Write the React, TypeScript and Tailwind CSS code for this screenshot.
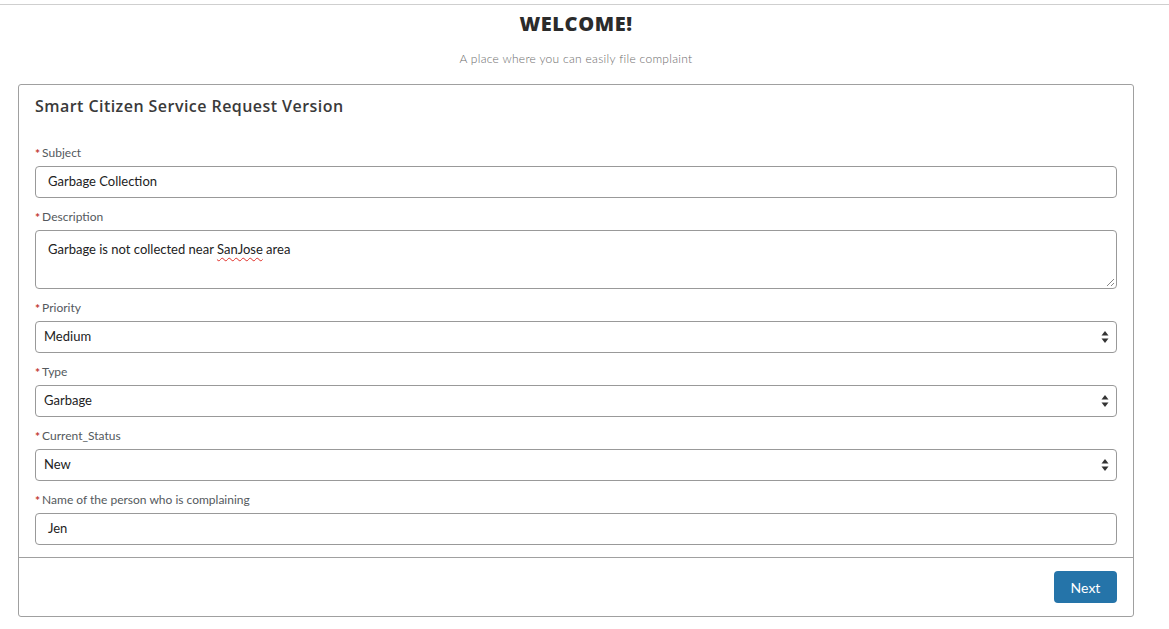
import React from "react";

const Label = ({ text }: { text: string }) => (
  <div className="flex items-center h-[16px] mb-[5px] text-[12px] text-[#54595d] leading-[16px]">
    <span className="text-[#c23934] text-[12px] font-bold mr-[2px] relative top-[1px]">*</span>
    {text}
  </div>
);

const Arrows = () => (
  <svg width="8" height="14" viewBox="0 0 8 14" className="shrink-0">
    <path d="M4 1 L7.5 5.5 L0.5 5.5 Z" fill="#333" />
    <path d="M4 13 L7.5 8.5 L0.5 8.5 Z" fill="#333" />
  </svg>
);

const TextField = ({ label, value }: { label: string; value: string }) => (
  <div className="mb-[11px]">
    <Label text={label} />
    <div className="h-[32px] border border-[#999] rounded-[4px] flex items-center pl-[12px] text-[13px] text-[#222]">
      <span>{value}</span>
    </div>
  </div>
);

const SelectField = ({ label, value }: { label: string; value: string }) => (
  <div className="mb-[11px]">
    <Label text={label} />
    <div className="h-[32px] border border-[#999] rounded-[4px] flex items-center justify-between pl-[8px] pr-[7px] text-[13px] text-[#222]">
      <span>{value}</span>
      <Arrows />
    </div>
  </div>
);

export default function App() {
  return (
    <div className="min-h-screen bg-white" style={{ fontFamily: "Lato, 'Open Sans', sans-serif" }}>
      <div className="pt-[4px]">
        <div className="h-[1px] bg-[#cfcfcf]" />
      </div>
      <div className="w-[1152px] text-center pt-[8px]">
        <h1 className="text-[20px] font-extrabold text-[#2b2b2b] tracking-[0.6px] leading-[22px]" style={{ fontFamily: "'Open Sans', sans-serif" }}>
          WELCOME!
        </h1>
        <p className="mt-[16px] text-[12px] font-light text-[#6b6b6b] leading-[16px] tracking-[0.3px]">
          A place where you can easily file complaint
        </p>
      </div>

      <div className="ml-[18px] mt-[17px] w-[1116px] border border-[#a0a0a0] rounded-[3px]">
        <div className="px-[16px] pt-[11px]">
          <h2 className="text-[16px] font-semibold text-[#3a3a3a] leading-[20px] tracking-[0.45px]" style={{ fontFamily: "'Open Sans', sans-serif" }}>
            Smart Citizen Service Request Version
          </h2>
        </div>
        <div className="px-[16px] pt-[29px] pb-[1px]">
          <TextField label="Subject" value="Garbage Collection" />
          <div className="mb-[11px]">
            <Label text="Description" />
            <div className="relative h-[59px] border border-[#999] rounded-[4px] pl-[12px] pt-[9px] text-[13px] text-[#222]">
              Garbage is not collected near{" "}
              <span className="underline decoration-wavy decoration-[#e0302a] underline-offset-[3px] decoration-[1px]">SanJose</span> area
              <svg width="9" height="9" viewBox="0 0 9 9" className="absolute right-[1px] bottom-[1px]">
                <path d="M8 1 L1 8 M8 5 L5 8" stroke="#888" strokeWidth="1" />
              </svg>
            </div>
          </div>
          <SelectField label="Priority" value="Medium" />
          <SelectField label="Type" value="Garbage" />
          <SelectField label="Current_Status" value="New" />
          <TextField label="Name of the person who is complaining" value="Jen" />
        </div>
        <div className="border-t border-[#a0a0a0] flex justify-end px-[16px] py-[13px]">
          <button className="h-[32px] w-[63px] rounded-[4px] bg-[#2574a9] text-white text-[14px]">Next</button>
        </div>
      </div>
    </div>
  );
}
